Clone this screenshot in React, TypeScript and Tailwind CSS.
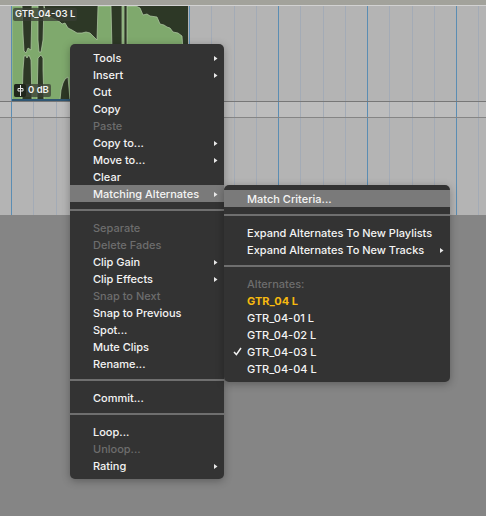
import React from "react";

type Item = {
  label?: string;
  off?: boolean;
  arrow?: boolean;
  hot?: boolean;
  sep?: boolean;
  gold?: boolean;
  check?: boolean;
};

const mainMenu: Item[] = [
  { label: "Tools", arrow: true },
  { label: "Insert", arrow: true },
  { label: "Cut" },
  { label: "Copy" },
  { label: "Paste", off: true },
  { label: "Copy to...", arrow: true },
  { label: "Move to...", arrow: true },
  { label: "Clear" },
  { label: "Matching Alternates", arrow: true, hot: true },
  { sep: true },
  { label: "Separate", off: true },
  { label: "Delete Fades", off: true },
  { label: "Clip Gain", arrow: true },
  { label: "Clip Effects", arrow: true },
  { label: "Snap to Next", off: true },
  { label: "Snap to Previous" },
  { label: "Spot..." },
  { label: "Mute Clips" },
  { label: "Rename..." },
  { sep: true },
  { label: "Commit..." },
  { sep: true },
  { label: "Loop..." },
  { label: "Unloop...", off: true },
  { label: "Rating", arrow: true },
];

const subMenu: Item[] = [
  { label: "Match Criteria...", hot: true },
  { sep: true },
  { label: "Expand Alternates To New Playlists" },
  { label: "Expand Alternates To New Tracks", arrow: true },
  { sep: true },
  { label: "Alternates:", off: true },
  { label: "GTR_04 L", gold: true },
  { label: "GTR_04-01 L" },
  { label: "GTR_04-02 L" },
  { label: "GTR_04-03 L", check: true },
  { label: "GTR_04-04 L" },
];

const Ticks = () => (
  <div className="flex h-full pl-[11px]">
    {Array.from({ length: 22 }).map((_, i) => (
      <div
        key={i}
        className={
          i % 4 === 0
            ? "w-[22.25px] shrink-0 border-l border-[#5b8db3]"
            : "w-[22.25px] shrink-0 border-l border-[#a3abb6]"
        }
      />
    ))}
  </div>
);

const MenuRow = ({ item }: { item: Item }) => {
  if (item.sep) {
    return (
      <div className="h-[17px] pt-[7px]">
        <div className="h-[2px] bg-[#6f6f6f]" />
      </div>
    );
  }
  let tone = "text-[#f4f4f4]";
  if (item.off) tone = "text-[#6d6d6d]";
  if (item.gold) tone = "text-[#f6b90f] font-bold";
  return (
    <div
      className={
        item.hot
          ? "relative flex h-[17px] items-center bg-[#7a7a7a] pl-[23px] pr-[6px] pt-[2px]"
          : "relative flex h-[17px] items-center pl-[23px] pr-[6px] pt-[2px]"
      }
    >
      {item.check && (
        <svg className="absolute left-[9px] top-[4px]" width="9" height="9" viewBox="0 0 9 9">
          <path d="M1 5 L3.4 7.6 L8 1" fill="none" stroke="#f4f4f4" strokeWidth="1.5" />
        </svg>
      )}
      <span className={"flex-1 whitespace-nowrap " + tone}>{item.label}</span>
      {item.arrow && (
        <svg width="4" height="5" viewBox="0 0 4 5">
          <polygon points="0,0 3.5,2.5 0,5" fill="#e8e8e8" />
        </svg>
      )}
    </div>
  );
};

const Clip = () => (
  <div className="absolute left-[12px] top-[6px] h-[95px] w-[176px] border-b-2 border-[#2f5673] bg-[#2d3826]">
    <svg className="block" width="176" height="93" viewBox="12 6 176 93">
      <polygon
        fill="#7fa96d"
        stroke="#b4cba8"
        strokeWidth="0.7"
        points="12,6 22,6 23,34 24,51 26,53 28,48 31,50 32,6 38,6 38,40 39,52 41,52 43,40 44,6 47,15 50,17 58,21 60,22 62,24 65,23 68,28 72,30 77,33 82,33 86,32 90,33 93,36 97,40 98,6 111,6 112,50 122,50 122,6 124,6 124,50 127,50 127,6 136,6 140,8 143,15 147,14 150,16 157,17 160,24 164,25 167,27 170,28 173,32 178,33 182,36 183,50 183,100 70,100 68,77 65,79 63,83 61,90 60,100 44,100 43,70 43,58 41,55 38,58 37,100 32,100 31,60 29,55 27,58 25,55 24,57 23,70 22,100 12,100"
      />
    </svg>
    <div className="absolute left-[1px] top-[2px] flex h-[13px] w-[64px] items-center whitespace-nowrap rounded-[2px] bg-[#3a3f36]/75 pl-[2px] text-[9.5px] font-semibold tracking-normal text-[#f2f2f2]">
      GTR_04-03 L
    </div>
    <div className="absolute left-[2px] top-[78px] flex h-[13px] w-[37px] items-center rounded-[2px] bg-[#3a3f36]/75 text-[9.5px] font-semibold text-[#f2f2f2]">
      <div className="flex h-[13px] w-[12px] items-center justify-center rounded-[2px] bg-[#20261c]">
        <svg width="7" height="11" viewBox="0 0 7 11">
          <path d="M3.5 0 V11 M1 3.5 H6 V6 H1 Z" fill="none" stroke="#e8e8e8" strokeWidth="1" />
        </svg>
      </div>
      <span className="ml-[2px] whitespace-nowrap">0 dB</span>
    </div>
  </div>
);

export default function App() {
  return (
    <div className="relative flex h-[516px] w-[486px] flex-col overflow-hidden bg-[#858585] font-['Inter',sans-serif] text-[11px] font-medium tracking-normal">
      <div className="h-[5px] bg-[#a2a29b]" />
      <div className="h-px bg-[#d2d2d2]" />
      <div className="h-[95px] bg-[#b4b4b4]">
        <Ticks />
      </div>
      <div className="h-px bg-[#777777]" />
      <div className="h-[15px] bg-[#bdbdbd]">
        <Ticks />
      </div>
      <div className="h-px bg-[#858585]" />
      <div className="h-[97px] bg-[#b4b4b4]">
        <Ticks />
      </div>

      <Clip />

      <div className="absolute left-[70px] top-[44px] h-[435px] w-[154px] rounded-[5px] bg-[#333333] pt-[5px] shadow-[0_2px_8px_rgba(0,0,0,0.3)]">
        {mainMenu.map((item, i) => (
          <MenuRow key={i} item={item} />
        ))}
      </div>

      <div className="absolute left-[224px] top-[185px] h-[197px] w-[226px] rounded-[5px] bg-[#333333] pt-[5px] shadow-[0_2px_8px_rgba(0,0,0,0.3)]">
        {subMenu.map((item, i) => (
          <MenuRow key={i} item={item} />
        ))}
      </div>
    </div>
  );
}
